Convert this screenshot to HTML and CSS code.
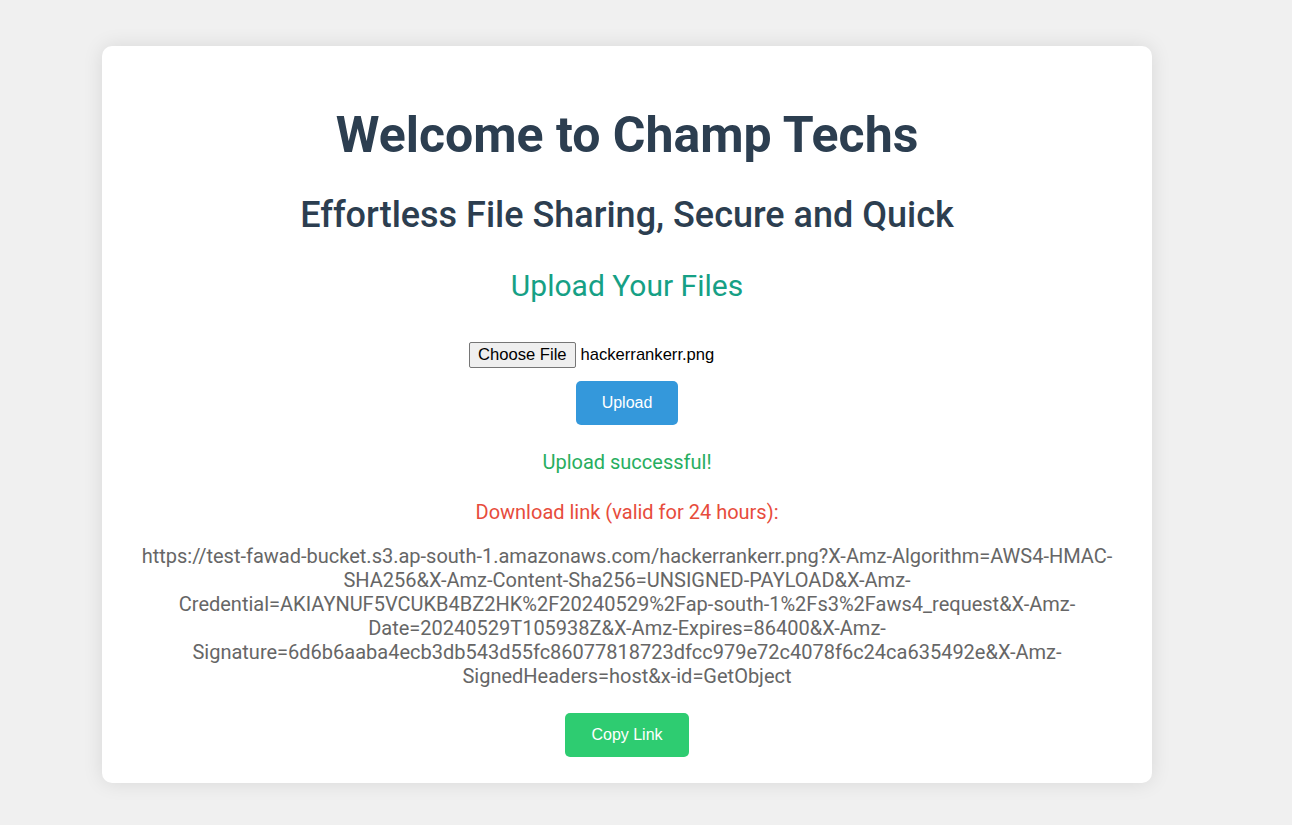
FILE: index.html
```html
<!DOCTYPE html>
<html lang="en">
<head>
<meta charset="utf-8">
<title>Champ Techs</title>
<link rel="stylesheet" href="styles.css">
</head>
<body>
<div class="card">
  <h1 class="title">Welcome to Champ Techs</h1>
  <h2 class="subtitle">Effortless File Sharing, Secure and Quick</h2>
  <h3 class="section">Upload Your Files</h3>
  <form class="upload-form">
    <div class="file-row">
      <span class="file-btn">Choose File</span><span class="file-name">hackerrankerr.png</span>
    </div>
    <button type="button" class="btn btn-blue">Upload</button>
  </form>
  <p class="success">Upload successful!</p>
  <p class="download">Download link (valid for 24 hours):</p>
  <p class="url">https://test-fawad-bucket.s3.ap-south-1.amazonaws.com/hackerrankerr.png?X-Amz-Algorithm=AWS4-HMAC-SHA256&amp;X-Amz-Content-Sha256=UNSIGNED-PAYLOAD&amp;X-Amz-Credential=AKIAYNUF5VCUKB4BZ2HK%2F20240529%2Fap-south-1%2Fs3%2Faws4_request&amp;X-Amz-Date=20240529T105938Z&amp;X-Amz-Expires=86400&amp;X-Amz-Signature=6d6b6aaba4ecb3db543d55fc86077818723dfcc979e72c4078f6c24ca635492e&amp;X-Amz-SignedHeaders=host&amp;x-id=GetObject</p>
  <button type="button" class="btn btn-green">Copy Link</button>
</div>
</body>
</html>
```
FILE: styles.css
```css
html, body {
  margin: 0;
  padding: 0;
}
body {
  background: #f0f0f0;
  font-family: Roboto, "Liberation Sans", Arial, sans-serif;
  min-height: 825px;
  padding: 46px 0 0 102px;
  box-sizing: border-box;
}
.card {
  width: 1050px;
  box-sizing: border-box;
  background: #fff;
  border-radius: 10px;
  box-shadow: 0 0 20px rgba(0, 0, 0, 0.1);
  padding: 40px 40px 26px;
  text-align: center;
  display: flex;
  flex-direction: column;
  align-items: center;
}
.title {
  margin: 20px 0 0;
  font-size: 50px;
  font-weight: 700;
  color: #2c3e50;
  line-height: 58px;
}
.subtitle {
  margin: 30px 0 0;
  font-size: 36px;
  font-weight: 500;
  color: #2c3e50;
  line-height: 42px;
}
.section {
  margin: 32px 0 0;
  font-size: 30px;
  font-weight: 400;
  color: #16a085;
  line-height: 36px;
}
.upload-form {
  margin-top: 38px;
  display: flex;
  flex-direction: column;
  align-items: center;
}
.file-row {
  width: 316px;
  display: flex;
  align-items: center;
  font-family: "Liberation Sans", Arial, sans-serif;
  font-size: 16.6px;
  color: #000;
}
.file-btn {
  background: #efefef;
  border: 1px solid #767676;
  border-radius: 2px;
  padding: 3px 8px 3px;
  margin-right: 5px;
  line-height: 18px;
}
.file-name {
  line-height: 18px;
}
.btn {
  font-family: "Liberation Sans", Arial, sans-serif;
  font-size: 16px;
  color: #fff;
  border: none;
  border-radius: 5px;
  padding: 13px 0;
  line-height: 18px;
  cursor: pointer;
}
.btn-blue {
  background: #3498db;
  margin-top: 13px;
  width: 102px;
}
.btn-green {
  background: #2ecc71;
  width: 124px;
  margin-top: 25px;
}
.success {
  margin: 25px 0 0;
  font-size: 20px;
  line-height: 24px;
  color: #27ae60;
}
.download {
  margin: 26px 0 0;
  font-size: 20px;
  line-height: 24px;
  color: #e74c3c;
}
.url {
  margin: 20px -6px 0;
  font-size: 20px;
  line-height: 24px;
  color: #666;
}
```
